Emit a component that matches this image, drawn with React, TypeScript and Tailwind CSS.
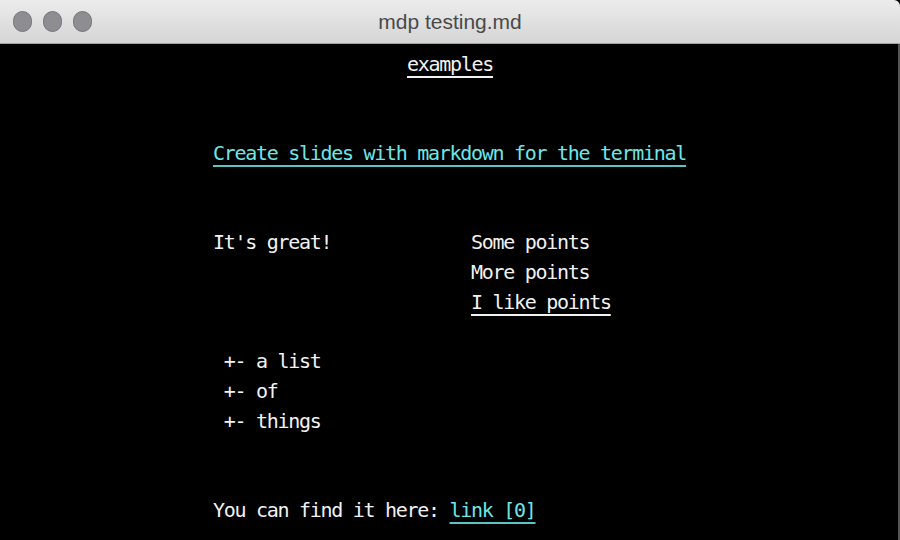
const mono = "font-['DejaVu_Sans_Mono',monospace] text-[20px] tracking-[-1.29px]";

function Row({ children }: { children?: React.ReactNode }) {
  return <div className="h-[29.75px] leading-[29.75px] whitespace-pre">{children ?? " "}</div>;
}

function U({ children, cyan }: { children: React.ReactNode; cyan?: boolean }) {
  return (
    <span
      className={
        "underline decoration-[1.5px] underline-offset-[5px] " +
        (cyan ? "text-[#6ee6e6] decoration-[#58c4c4]" : "text-[#f2f2f2]")
      }
    >
      {children}
    </span>
  );
}

export default function App() {
  return (
    <div className="w-[900px] h-[540px] overflow-hidden bg-black flex flex-col">
      {/* title bar */}
      <div className="h-[44px] shrink-0 rounded-tr-[6px] bg-gradient-to-b from-[#ececec] to-[#d5d5d5] border-b border-[#a3a3a3] flex items-center relative">
        <div className="flex gap-[11px] pl-[13px]">
          <span className="w-[19px] h-[21px] rounded-full bg-[#8d8d92] border border-[#76767a]" />
          <span className="w-[19px] h-[21px] rounded-full bg-[#8d8d92] border border-[#76767a]" />
          <span className="w-[19px] h-[21px] rounded-full bg-[#8d8d92] border border-[#76767a]" />
        </div>
        <div className="absolute inset-0 flex items-center justify-center font-['Liberation_Sans',sans-serif] text-[21px] text-[#4a4a4a]">
          mdp testing.md
        </div>
      </div>
      {/* terminal */}
      <div className={"flex-1 pt-[5.5px] text-[#f2f2f2] border-r-2 border-[#555] " + mono}>
        <Row>
          <span className="pl-[407px]"><U>examples</U></span>
        </Row>
        <Row />
        <Row />
        <div className="pl-[213px]">
          <Row><U cyan>Create slides with markdown for the terminal</U></Row>
          <Row />
          <Row />
          <Row>{"It's great!             Some points"}</Row>
          <Row>{"                        More points"}</Row>
          <Row>{"                        "}<U>I like points</U></Row>
          <Row />
          <Row>{" +- a list"}</Row>
          <Row>{" +- of"}</Row>
          <Row>{" +- things"}</Row>
          <Row />
          <Row />
          <Row>
            {"You can find it here: "}
            <U cyan>link [0]</U>
          </Row>
        </div>
      </div>
    </div>
  );
}
